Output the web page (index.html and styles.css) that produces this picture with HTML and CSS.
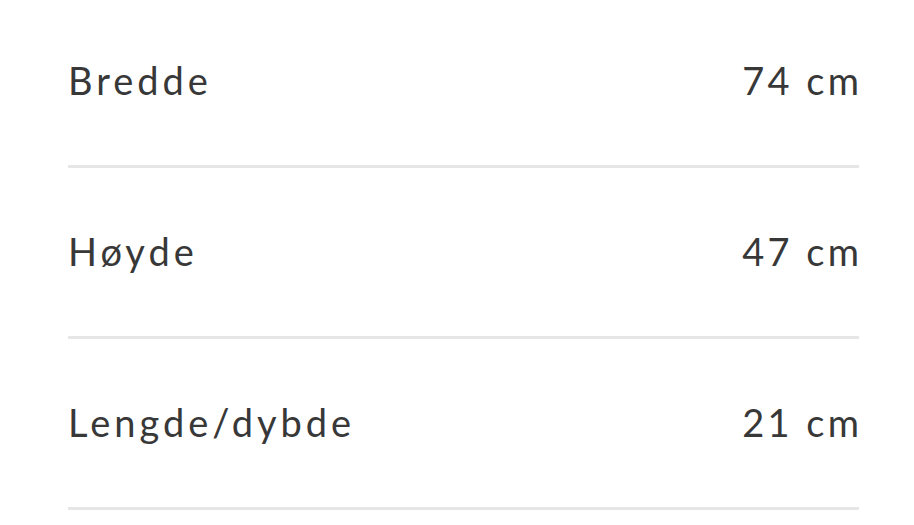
FILE: index.html
```html
<!DOCTYPE html>
<html lang="no">
<head>
<meta charset="utf-8">
<link rel="stylesheet" href="styles.css">
</head>
<body>
<dl class="specs">
  <div class="row"><dt>Bredde</dt><dd>74 cm</dd></div>
  <div class="row"><dt>Høyde</dt><dd>47 cm</dd></div>
  <div class="row"><dt>Lengde/dybde</dt><dd>21 cm</dd></div>
</dl>
</body>
</html>
```
FILE: styles.css
```css
html, body {
  margin: 0;
  padding: 0;
  background: #fff;
}
body {
  font-family: "Lato", "Open Sans", sans-serif;
  color: #383838;
}
.specs {
  margin: -3px 0 0;
  padding: 0 55px 0 68px;
}
.row {
  display: flex;
  justify-content: space-between;
  align-items: center;
  height: 168px;
  border-bottom: 3px solid #e6e6e6;
}
.row dt, .row dd {
  margin: 0;
  font-size: 38px;
  font-weight: 400;
  line-height: 44px;
  padding-bottom: 2px;
  letter-spacing: 3.4px;
}
.row dt {
  letter-spacing: 4px;
}
.row dd {
  margin-right: -3.4px;
}
```
